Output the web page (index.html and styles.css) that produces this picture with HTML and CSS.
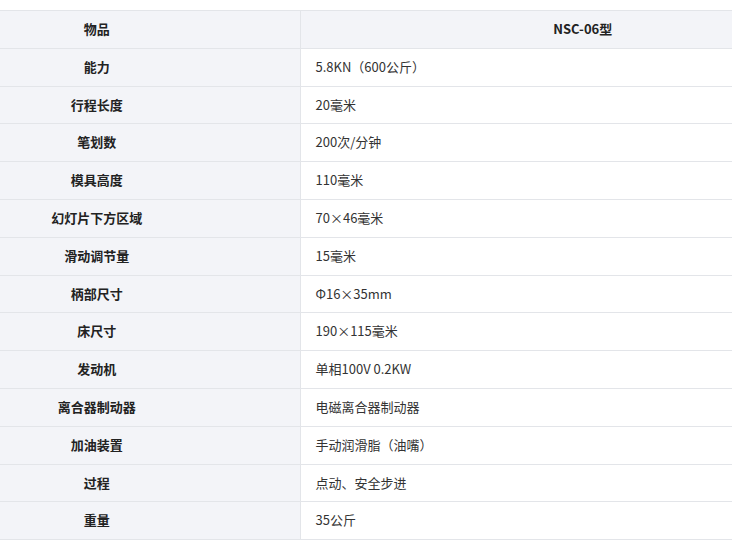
FILE: index.html
```html
<!DOCTYPE html>
<html lang="zh">
<head>
<meta charset="utf-8">
<link rel="stylesheet" href="styles.css">
</head>
<body>
<div class="wrap">
<table class="spec">
<thead>
<tr><th class="k">物品</th><th class="v">NSC-06型</th></tr>
</thead>
<tbody>
<tr><th class="k">能力</th><td class="v">5.8KN（600公斤）</td></tr>
<tr><th class="k">行程长度</th><td class="v">20毫米</td></tr>
<tr><th class="k">笔划数</th><td class="v">200次/分钟</td></tr>
<tr><th class="k">模具高度</th><td class="v">110毫米</td></tr>
<tr><th class="k">幻灯片下方区域</th><td class="v">70×46毫米</td></tr>
<tr><th class="k">滑动调节量</th><td class="v">15毫米</td></tr>
<tr><th class="k">柄部尺寸</th><td class="v">Φ16×35mm</td></tr>
<tr><th class="k">床尺寸</th><td class="v">190×115毫米</td></tr>
<tr><th class="k">发动机</th><td class="v">单相100V 0.2KW</td></tr>
<tr><th class="k">离合器制动器</th><td class="v">电磁离合器制动器</td></tr>
<tr><th class="k">加油装置</th><td class="v">手动润滑脂（油嘴）</td></tr>
<tr><th class="k">过程</th><td class="v">点动、安全步进</td></tr>
<tr><th class="k">重量</th><td class="v">35公斤</td></tr>
</tbody>
</table>
</div>
</body>
</html>
```
FILE: styles.css
```css
html, body {
  margin: 0;
  padding: 0;
  background: #fff;
}
.wrap {
  padding-top: 10px;
}
.spec {
  border-collapse: collapse;
  table-layout: fixed;
  width: 732px;
  font-family: "Noto Sans CJK SC", "Noto Sans", sans-serif;
  font-size: 13px;
  line-height: 20.8px;
  color: #333;
}
.spec th, .spec td {
  padding: 8px 15px;
  border-top: 1px solid #e3e5e9;
  border-bottom: 1px solid #e3e5e9;
}
.spec .k {
  width: 300px;
  box-sizing: border-box;
  padding: 8px 106px 8px 0;
  background: #f3f4f8;
  font-weight: bold;
  text-align: center;
  border-right: 1px solid #e3e5e9;
  color: #222;
}
.spec thead .v {
  padding: 8px 0 8px 133px;
  background: #f3f4f8;
  font-weight: bold;
  text-align: center;
  color: #222;
}
.spec tbody .v {
  text-align: left;
  font-weight: normal;
}
```
